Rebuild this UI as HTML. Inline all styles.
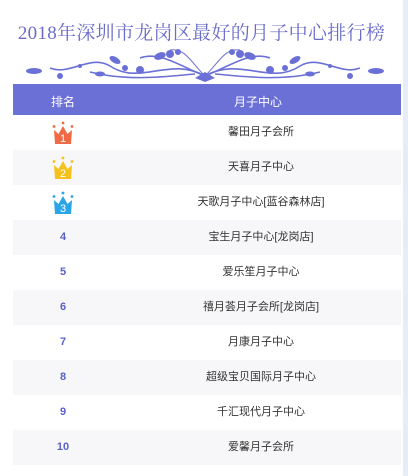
<!DOCTYPE html><html><head><meta charset="utf-8"><style>
body{margin:0;width:408px;height:476px;background:#fff;position:relative;overflow:hidden;font-family:"Liberation Sans","Noto Sans CJK SC",sans-serif}
.edge{position:absolute;left:403px;top:0;width:5px;height:476px;background:#e6edf8}
h1{position:absolute;top:18px;left:0;width:403px;margin:0;text-align:center;font:400 19px "Liberation Serif","Noto Serif CJK SC",serif;color:#6a6cc8;letter-spacing:0.3px}
.hdr{position:absolute;left:13px;top:84px;width:388px;height:31px;background:#6b70d6;color:#fff;font-size:12px}
.row{position:absolute;left:13px;width:388px;height:35px;font-size:11px;color:#333}
.g{background:#f7f7f9}
.r{position:absolute;left:0;width:100px;text-align:center;top:0;line-height:35px;color:#5a5fc8;font-weight:bold;font-size:11px}
.n{position:absolute;left:150px;width:196px;text-align:center;line-height:35px}
.crown{position:absolute;left:39px;top:6px}
</style></head><body>
<div class="edge"></div>
<h1>2018年深圳市龙岗区最好的月子中心排行榜</h1>
<svg style="position:absolute;left:20px;top:46px" width="370" height="38" viewBox="0 0 370 38">
<g fill="none" stroke="#6b70d6" stroke-width="1.6">
<path d="M185 30 C150 10 120 40 90 20 C70 8 50 30 30 22"/>
<path d="M185 30 C220 10 250 40 280 20 C300 8 320 30 340 22"/>
<path d="M185 30 C160 20 140 5 120 12 M185 30 C210 20 230 5 250 12"/>
<path d="M175 28 C150 30 110 36 70 26 M195 28 C220 30 260 36 300 26"/>
<path d="M185 30 C170 15 165 2 150 4 M185 30 C200 15 205 2 220 4" stroke-width="1"/>
</g>
<g fill="#6b70d6">
<ellipse cx="14" cy="25" rx="8" ry="3"/><ellipse cx="356" cy="25" rx="8" ry="3"/>
<ellipse cx="140" cy="10" rx="6" ry="3.5" transform="rotate(-20 140 10)"/><ellipse cx="230" cy="10" rx="6" ry="3.5" transform="rotate(20 230 10)"/>
<ellipse cx="95" cy="14" rx="6" ry="3" transform="rotate(30 95 14)"/><ellipse cx="275" cy="14" rx="6" ry="3" transform="rotate(-30 275 14)"/>
<ellipse cx="80" cy="28" rx="5" ry="2.5"/><ellipse cx="290" cy="28" rx="5" ry="2.5"/>
<circle cx="150" cy="8" r="4"/><circle cx="158" cy="6" r="3"/><circle cx="220" cy="8" r="4"/><circle cx="212" cy="6" r="3"/>
<circle cx="105" cy="22" r="3"/><circle cx="265" cy="22" r="3"/><circle cx="120" cy="24" r="4"/><circle cx="250" cy="24" r="4"/>
<circle cx="60" cy="20" r="2"/><circle cx="310" cy="20" r="2"/><circle cx="330" cy="30" r="3"/><circle cx="40" cy="30" r="3"/>
<path d="M175 32 L185 26 L195 32 L185 36Z"/>
</g></svg>
<div class="hdr"><span style="position:absolute;left:38px;top:9px">排名</span><span style="position:absolute;left:221px;top:9px">月子中心</span></div>
<div class="row" style="top:115px"><svg class="crown" width="22" height="24"><path d="M2 9 L6.5 13 L11 5 L15.5 13 L20 9 L19 23 L3 23Z" fill="#f06a45"/><circle cx="2" cy="5.5" r="1.4" fill="#f06a45"/><circle cx="11" cy="2" r="1.4" fill="#f06a45"/><circle cx="20" cy="5.5" r="1.4" fill="#f06a45"/><text x="11" y="21" font-size="11" fill="#fff" text-anchor="middle" font-family="Liberation Sans">1</text></svg><div class="n">馨田月子会所</div></div>
<div class="row g" style="top:150px"><svg class="crown" width="22" height="24"><path d="M2 9 L6.5 13 L11 5 L15.5 13 L20 9 L19 23 L3 23Z" fill="#f5c21b"/><circle cx="2" cy="5.5" r="1.4" fill="#f5c21b"/><circle cx="11" cy="2" r="1.4" fill="#f5c21b"/><circle cx="20" cy="5.5" r="1.4" fill="#f5c21b"/><text x="11" y="21" font-size="11" fill="#fff" text-anchor="middle" font-family="Liberation Sans">2</text></svg><div class="n">天喜月子中心</div></div>
<div class="row" style="top:185px"><svg class="crown" width="22" height="24"><path d="M2 9 L6.5 13 L11 5 L15.5 13 L20 9 L19 23 L3 23Z" fill="#2aa6e8"/><circle cx="2" cy="5.5" r="1.4" fill="#2aa6e8"/><circle cx="11" cy="2" r="1.4" fill="#2aa6e8"/><circle cx="20" cy="5.5" r="1.4" fill="#2aa6e8"/><text x="11" y="21" font-size="11" fill="#fff" text-anchor="middle" font-family="Liberation Sans">3</text></svg><div class="n">天歌月子中心[蓝谷森林店]</div></div>
<div class="row g" style="top:220px"><div class="r">4</div><div class="n">宝生月子中心[龙岗店]</div></div>
<div class="row" style="top:255px"><div class="r">5</div><div class="n">爱乐笙月子中心</div></div>
<div class="row g" style="top:290px"><div class="r">6</div><div class="n">禧月荟月子会所[龙岗店]</div></div>
<div class="row" style="top:325px"><div class="r">7</div><div class="n">月康月子中心</div></div>
<div class="row g" style="top:360px"><div class="r">8</div><div class="n">超级宝贝国际月子中心</div></div>
<div class="row" style="top:395px"><div class="r">9</div><div class="n">千汇现代月子中心</div></div>
<div class="row g" style="top:430px"><div class="r">10</div><div class="n">爱馨月子会所</div></div>
</body></html>
